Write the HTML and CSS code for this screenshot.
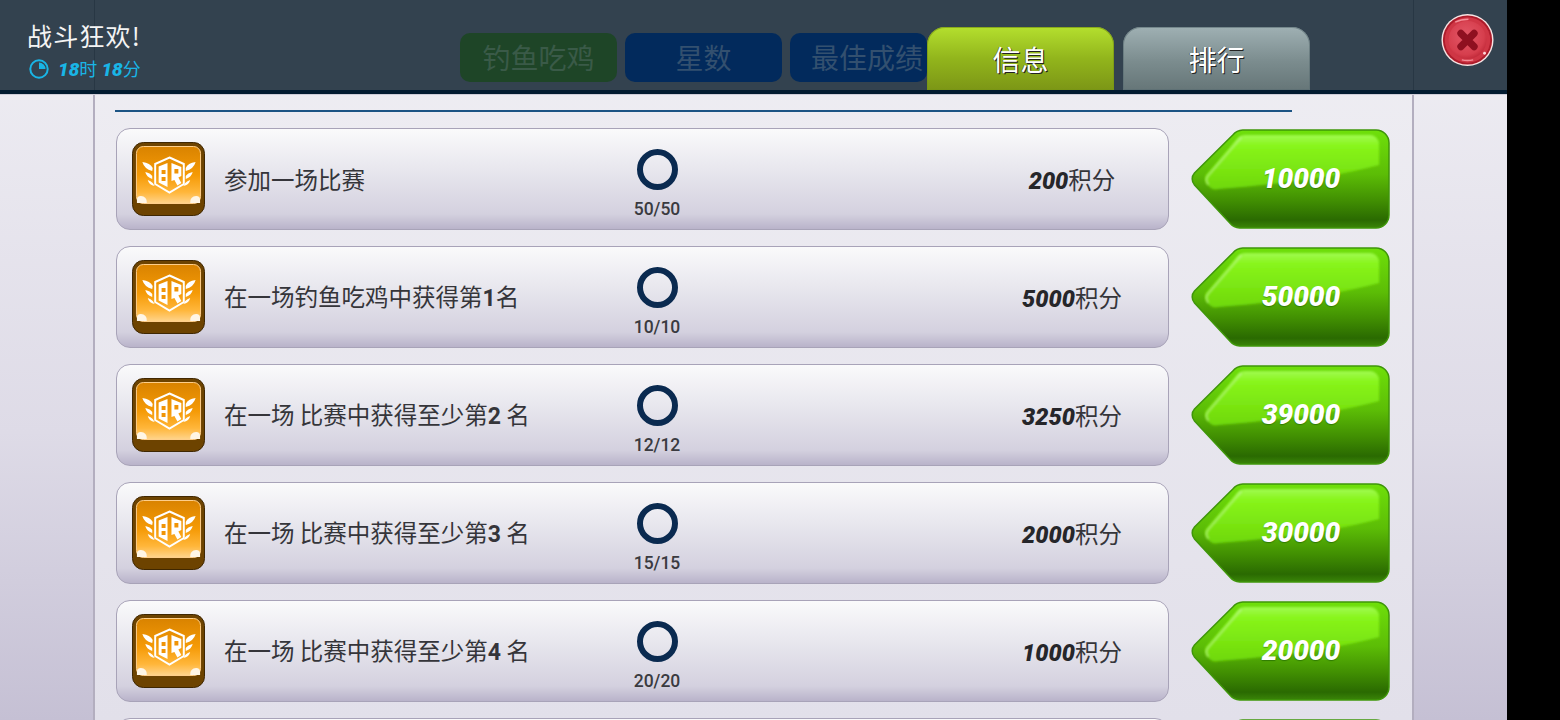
FILE: index.html
```html
<!DOCTYPE html>
<html lang="zh">
<head>
<meta charset="utf-8">
<title>战斗狂欢</title>
<link rel="stylesheet" href="styles.css">
</head>
<body>
<svg class="defs" width="0" height="0" aria-hidden="true">
  <defs>
    <linearGradient id="gOrange" x1="0" y1="0" x2="0" y2="1"><stop offset="0" stop-color="#d98300"/><stop offset=".5" stop-color="#f59a06"/><stop offset=".8" stop-color="#ffb63a"/><stop offset="1" stop-color="#ffd48c"/></linearGradient>
    <linearGradient id="gGreen" x1="0" y1="0" x2="0" y2="1"><stop offset="0" stop-color="#6fe00a"/><stop offset=".45" stop-color="#5cbd06"/><stop offset=".72" stop-color="#418f02"/><stop offset=".92" stop-color="#2a6a01"/><stop offset="1" stop-color="#3a8508"/></linearGradient>
    <linearGradient id="gShine" x1="0" y1="0" x2="0" y2="1"><stop offset="0" stop-color="#a0fb50"/><stop offset=".2" stop-color="#88f51b"/><stop offset="1" stop-color="#6fd80a"/></linearGradient>
    <radialGradient id="gRed" cx=".45" cy=".4" r=".65"><stop offset="0" stop-color="#e35868"/><stop offset=".75" stop-color="#d63e4d"/><stop offset="1" stop-color="#bc2535"/></radialGradient>
    <filter id="soft" x="-5%" y="-5%" width="110%" height="110%"><feGaussianBlur stdDeviation=".9"/></filter>
    <symbol id="badge" viewBox="0 0 74 74" preserveAspectRatio="none">
      <rect x=".5" y=".5" width="73" height="73" rx="11" fill="#6d4300" stroke="#3e2600"/>
      <rect x="4.5" y="4.5" width="65" height="57" rx="7" fill="url(#gOrange)" stroke="#ffcf8a" stroke-width="1"/>
      <path d="M5 61v-3a4 4 0 0 1 4-4 6 6 0 0 1 6 7zM69 61v-3a4 4 0 0 0-4-4 6 6 0 0 0-6 7z" fill="#fff6e6"/>
      <path d="M38 15.500l14.500 6.500v20l-14.500 8.500-14.500-8.500V22z" fill="none" stroke="#fff" stroke-width="2"/>
      <path d="M27 24.500l9-3.500v24l-9-4.500zM40 21l10 4v9l-3 1.500 3 5.500-4 2.500-3-5.500-3 1z" fill="#fff"/>
      <path d="M30 28h4v4h-4zM30 35h4v4h-4zM43 27h4v4.500h-4z" fill="#f09406"/>
      <path d="M10.500 20q8 1 10.500 6l-.500 3q-8-2-10-9zM13.500 30q5 1 7 4v3q-6-2-7-7zM16 38q3 1 5 3l2 3q-6-1-7-6z" fill="#fff"/>
      <path d="M64.500 20q-8 1-10 6v3q8-2 10-9zM61.500 30q-5 1-7 4v3q6-2 7-7zM59 38q-3 1-5 3l-2 3q6-1 7-6z" fill="#fff"/>
    </symbol>
    <symbol id="prize" viewBox="0 0 200 100" preserveAspectRatio="none">
      <path d="M52 1H186a13 13 0 0 1 13 13V86a13 13 0 0 1-13 13H49a14 14 0 0 1-10-5L3.500 56a9 9 0 0 1 0-12L42 6a14 14 0 0 1 10-5z" fill="url(#gGreen)" stroke="#3f960a" stroke-width="1.500"/>
      <path d="M56 6H180a9 9 0 0 1 9 9V36Q130 52 28 60a10 10 0 0 1-11-4 8 8 0 0 1-2-10L46 10a12 12 0 0 1 10-4z" fill="url(#gShine)" filter="url(#soft)"/>
      <path d="M50 9L17 47a7 7 0 0 0 0 8" fill="none" stroke="#c4f5a0" stroke-width="2.500" opacity=".5" stroke-linecap="round" filter="url(#soft)"/>
    </symbol>
  </defs>
</svg>
<div class="screen">
  <div class="game">
    <div class="panel">
      <div class="rule"></div>
      <div class="rows">
        <div class="row">
          <div class="card">
            <svg class="badge"><use href="#badge"/></svg>
            <div class="label">参加一场比赛</div>
            <div class="prog"><span class="ring"></span><span class="count">50/50</span></div>
            <div class="pts"><b>200</b>积分</div>
          </div>
          <div class="prize"><svg class="prize-bg"><use href="#prize"/></svg><span>10000</span></div>
        </div>
        <div class="row">
          <div class="card">
            <svg class="badge"><use href="#badge"/></svg>
            <div class="label">在一场钓鱼吃鸡中获得第<b>1</b>名</div>
            <div class="prog"><span class="ring"></span><span class="count">10/10</span></div>
            <div class="pts"><b>5000</b>积分</div>
          </div>
          <div class="prize"><svg class="prize-bg"><use href="#prize"/></svg><span>50000</span></div>
        </div>
        <div class="row">
          <div class="card">
            <svg class="badge"><use href="#badge"/></svg>
            <div class="label">在一场 比赛中获得至少第<b>2</b> 名</div>
            <div class="prog"><span class="ring"></span><span class="count">12/12</span></div>
            <div class="pts"><b>3250</b>积分</div>
          </div>
          <div class="prize"><svg class="prize-bg"><use href="#prize"/></svg><span>39000</span></div>
        </div>
        <div class="row">
          <div class="card">
            <svg class="badge"><use href="#badge"/></svg>
            <div class="label">在一场 比赛中获得至少第<b>3</b> 名</div>
            <div class="prog"><span class="ring"></span><span class="count">15/15</span></div>
            <div class="pts"><b>2000</b>积分</div>
          </div>
          <div class="prize"><svg class="prize-bg"><use href="#prize"/></svg><span>30000</span></div>
        </div>
        <div class="row">
          <div class="card">
            <svg class="badge"><use href="#badge"/></svg>
            <div class="label">在一场 比赛中获得至少第<b>4</b> 名</div>
            <div class="prog"><span class="ring"></span><span class="count">20/20</span></div>
            <div class="pts"><b>1000</b>积分</div>
          </div>
          <div class="prize"><svg class="prize-bg"><use href="#prize"/></svg><span>20000</span></div>
        </div>
        <div class="row">
          <div class="card"></div>
          <div class="prize"><svg class="prize-bg"><use href="#prize"/></svg></div>
        </div>
      </div>
    </div>
    <header class="topbar">
      <div class="title-block">
        <div class="title">战斗狂欢!</div>
        <div class="timer">
          <svg class="clock" viewBox="0 0 20 20"><circle cx="10" cy="10" r="8.700" fill="none" stroke="#19b5e6" stroke-width="2"/><path d="M10 10V3.500A6.500 6.500 0 0 1 16.500 10z" fill="#19b5e6"/></svg>
          <span class="time"><b>18</b>时 <b>18</b>分</span>
        </div>
      </div>
      <div class="tabs">
        <div class="dim-tab green">钓鱼吃鸡</div>
        <div class="dim-tab">星数</div>
        <div class="dim-tab cut">最佳成绩</div>
        <div class="tab lime">信息</div>
        <div class="tab grey">排行</div>
      </div>
      <svg class="close" viewBox="0 0 56 56">
        <circle cx="28" cy="28" r="27.500" fill="#f8e4e4"/>
        <circle cx="28" cy="28" r="26" fill="#ad1c2b"/>
        <circle cx="28" cy="28" r="24" fill="#cf3645"/>
        <circle cx="28" cy="28" r="20" fill="url(#gRed)"/>
        <path d="M21 21l14 14M35 21L21 35" stroke="#8f1020" stroke-width="7.500" stroke-linecap="round"/>
        <path d="M15 9q6-3 14-3" stroke="#f48e98" stroke-width="1.500" fill="none"/>
        <path d="M22 49q6 1.500 12 0" stroke="#f48e98" stroke-width="1.500" fill="none"/>
        <circle cx="46" cy="42" r="1.500" fill="#ffd5d8"/>
      </svg>
    </header>
  </div>
</div>
</body>
</html>
```

FILE: styles.css
```css
* { box-sizing: border-box; }
html, body { margin: 0; height: 100%; background: #000; overflow: hidden; }
body { font-family: "Noto Sans CJK SC", "Noto Sans", sans-serif; }
.defs { position: absolute; }
.screen { width: 1560px; height: 720px; background: #000; overflow: hidden; }
.game {
  position: relative;
  width: 1507px;
  height: 720px;
  overflow: hidden;
  background: linear-gradient(180deg, #f0eff4 0%, #dedbe7 60%, #c5c0d4 100%);
}
.panel {
  position: absolute;
  inset: 0 auto 0 93px;
  width: 1321px;
  padding: 110px 0 0 20px;
  border-left: 2px solid #b3aebf;
  border-right: 2px solid #b3aebf;
  background: linear-gradient(180deg, #efeef3 0%, #e2e0ea 100%);
}
.rule { width: 1177px; height: 2px; background: #1c5484; margin-bottom: 16px; }
.rows { display: flex; flex-direction: column; gap: 16px; margin-left: 1px; }
.row { display: flex; gap: 22px; height: 102px; flex: none; }
.card {
  width: 1053px;
  height: 102px;
  display: grid;
  grid-template-columns: 74px 411px 80px 1fr;
  align-items: center;
  padding-left: 15px;
  border: 1px solid #a8a3b8;
  border-radius: 14px;
  background: linear-gradient(180deg, #fafafb 0%, #e8e7ee 40%, #d4d1df 85%, #b9b3ca 100%);
}
.badge { width: 73px; height: 74px; margin-top: -1px; }
.label { margin-left: 18px; font-size: 23.500px; line-height: 30px; color: #35353a; white-space: pre; }
.label b { font-family: Roboto, sans-serif; font-weight: 700; font-size: 23px; }
.prog {
  align-self: start;
  margin-top: 20px;
  display: flex;
  flex-direction: column;
  align-items: center;
}
.ring { width: 41px; height: 41px; border: 6px solid #0a2a50; border-radius: 50%; }
.count { margin-top: 8px; font-family: Roboto, sans-serif; font-size: 17.500px; line-height: 22px; color: #3a3a40; font-weight: 500; }
.pts {
  margin-left: 275px;
  width: 200px;
  margin-top: 2px;
  text-align: center;
  font-size: 23.500px;
  line-height: 30px;
  color: #35353a;
  white-space: nowrap;
}
.pts b { font-family: Roboto, sans-serif; font-style: italic; font-weight: 900; font-size: 23.500px; color: #26262a; }
.prize { position: relative; width: 199px; height: 100px; flex: none; margin-top: 1px; }
.prize-bg { width: 199px; height: 100px; display: block; }
.prize span {
  position: absolute;
  left: 21px;
  right: 0;
  top: 32px;
  text-align: center;
  font-family: Roboto, sans-serif;
  font-style: italic;
  font-weight: 900;
  font-size: 28px;
  line-height: 36px;
  color: #fff;
  text-shadow: 0 1px 1px rgba(0,60,0,.4);
}
.topbar {
  position: absolute;
  inset: 0 0 auto 0;
  height: 94px;
  background: #33424f;
  border-bottom: 4px solid #021b30;
  box-shadow: 0 1px 0 #cfcdd8;
}
.topbar::before, .topbar::after {
  content: "";
  position: absolute;
  top: 0;
  bottom: 0;
  width: 1px;
  background: #283744;
}
.topbar::before { left: 94px; }
.topbar::after { left: 1413px; }
.title-block { position: absolute; left: 28px; top: 18px; }
.title { font-size: 25px; line-height: 34px; color: #f4f4f4; white-space: nowrap; letter-spacing: 1.200px; margin-left: -1px; }
.timer { display: flex; align-items: center; margin-top: 4px; color: #19b5e6; }
.time { font-size: 18px; line-height: 24px; white-space: pre; }
.time b { font-family: Roboto, sans-serif; font-style: italic; font-weight: 900; font-size: 19px; }
.clock { width: 20px; height: 20px; margin-left: 1px; margin-right: 9px; flex: none; }
.tabs { position: absolute; left: 460px; top: 0; height: 90px; display: flex; align-items: flex-end; }
.dim-tab {
  width: 157px;
  height: 49px;
  margin-bottom: 8px;
  margin-right: 8px;
  border-radius: 10px;
  background: #022a5c;
  color: #33506f;
  font-size: 28px;
  line-height: 49px;
  text-align: center;
  white-space: nowrap;
  overflow: hidden;
}
.dim-tab.green { background: #1e4527; color: #3a5a48; }
.dim-tab.cut { width: 137px; margin-right: 0; padding-left: 21px; text-align: left; }
.tab {
  width: 187px;
  height: 63px;
  margin-right: 9px;
  border-radius: 18px 18px 0 0;
  color: #fff;
  font-size: 28px;
  line-height: 64px;
  text-align: center;
  text-shadow: 1px 1px 0 #222, -1px 0 0 rgba(0,0,0,.3);
}
.tab.lime { background: linear-gradient(180deg, #b4df2e 0%, #92b51c 50%, #7c9616 100%); box-shadow: inset 0 0 0 1px rgba(120,150,20,.7); }
.tab.grey { background: linear-gradient(180deg, #9fb0b3 0%, #7b8c8e 55%, #667678 100%); box-shadow: inset 0 0 0 1px rgba(90,110,115,.6); }
.close { position: absolute; left: 1441px; top: 13px; width: 53px; height: 54px; }
```
